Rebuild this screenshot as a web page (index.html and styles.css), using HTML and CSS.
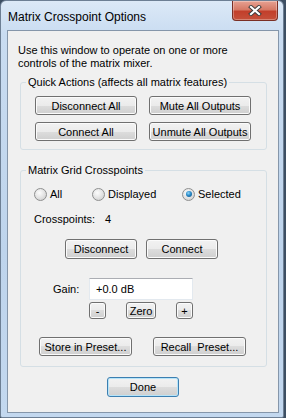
FILE: index.html
```html
<!DOCTYPE html>
<html lang="en">
<head>
  <title>Matrix Crosspoint Options</title>
  <meta charset="UTF-8">
  <link rel="stylesheet" href="styles.css">
</head>
<body>

  <div class="window">
    <div class="titlebar">
      <span class="title">Matrix Crosspoint Options</span>
      <div class="close">
        <svg width="16" height="11" viewBox="0 0 16 11">
          <path d="M4 2 L12 9 M12 2 L4 9" stroke="#3b3b3b" stroke-width="4" stroke-linecap="square" fill="none"/>
          <path d="M4 2 L12 9 M12 2 L4 9" stroke="#ffffff" stroke-width="2.2" stroke-linecap="square" fill="none"/>
        </svg>
      </div>
    </div>

    <div class="client">
      <p class="intro">Use this window to operate on one or more<br>controls of the matrix mixer.</p>

      <fieldset class="group quick">
        <legend>Quick Actions (affects all matrix features)</legend>
        <div class="quick-grid">
          <button class="btn">Disconnect All</button>
          <button class="btn">Mute All Outputs</button>
          <button class="btn">Connect All</button>
          <button class="btn">Unmute All Outputs</button>
        </div>
      </fieldset>

      <fieldset class="group grid">
        <legend>Matrix Grid Crosspoints</legend>

        <div class="radios">
          <label class="radio"><span class="dot"></span>All</label>
          <label class="radio"><span class="dot"></span>Displayed</label>
          <label class="radio"><span class="dot checked"></span>Selected</label>
        </div>

        <div class="count">
          <span class="count-label">Crosspoints:</span>
          <span>4</span>
        </div>

        <div class="connect-row">
          <button class="btn wide">Disconnect</button>
          <button class="btn wide">Connect</button>
        </div>

        <div class="gain-row">
          <span class="gain-label">Gain:</span>
          <div class="gain-box">+0.0 dB</div>
        </div>

        <div class="step-row">
          <button class="btn small">-</button>
          <button class="btn zero">Zero</button>
          <button class="btn small">+</button>
        </div>

        <div class="preset-row">
          <button class="btn preset">Store in Preset...</button>
          <button class="btn preset">Recall&nbsp; Preset...</button>
        </div>
      </fieldset>

      <div class="done-row">
        <button class="btn wide done">Done</button>
      </div>
    </div>
  </div>

</body>
</html>
```

FILE: styles.css
```css
html {
  background: #3d4f63;
}

body {
  margin: 0;
  font-family: 'Liberation Sans', Arial, sans-serif;
  font-size: 11px;
  color: #000;
}

.window {
  width: 284px;
  height: 418px;
  box-sizing: border-box;
  border: 1px solid #6d7f94;
  border-radius: 6px 6px 2px 2px;
  background: linear-gradient(180deg, #dce9f7 0%, #c9dcf1 8%, #bed4ec 60%, #c3d8ef 100%);
  display: flex;
  flex-direction: column;
}

.titlebar {
  height: 29px;
  display: flex;
  align-items: flex-start;
}

.title {
  font-size: 12px;
  margin: 9px 0 0 7px;
}

.close {
  margin-left: auto;
  margin-right: 5px;
  width: 46px;
  height: 20px;
  box-sizing: border-box;
  border: 1px solid #7a2f25;
  border-top: none;
  border-radius: 0 0 4px 4px;
  background: linear-gradient(180deg, #e6a192 0%, #d67a66 45%, #c23f2b 55%, #c5503a 100%);
  box-shadow: inset 0 0 0 1px rgba(255, 255, 255, 0.3);
  display: flex;
  align-items: center;
  justify-content: center;
}

.close svg {
  display: block;
}

.client {
  margin: 0 4px 0 6px;
  height: 383px;
  box-sizing: border-box;
  border: 1px solid #8596aa;
  background: #f0f0f0;
  display: flex;
  flex-direction: column;
}

.intro {
  margin: 13px 0 0 10px;
  line-height: 13px;
}

.group {
  margin: 6px 11px 0 12px;
  border: 1px solid #d5dfe5;
  border-radius: 3px;
  padding: 0;
  min-width: 0;
}

.group legend {
  padding: 0 2px;
  line-height: 13px;
}

.quick {
  padding: 7px 0 8px 14px;
}

.quick legend {
  margin-left: -9px;
}

.quick-grid {
  display: grid;
  grid-template-columns: 102px 102px;
  column-gap: 12px;
  row-gap: 7px;
}

.btn {
  height: 19px;
  box-sizing: border-box;
  border: 1px solid #707070;
  border-radius: 3px;
  background: linear-gradient(180deg, #f2f2f2 0%, #ebebeb 50%, #dddddd 50%, #cfcfcf 100%);
  box-shadow: inset 0 0 0 1px #fbfbfb;
  font-family: 'Liberation Sans', Arial, sans-serif;
  font-size: 11px;
  color: #000;
  padding: 0;
}

.grid {
  margin-top: 14px;
  padding: 0 0 10px 13px;
}

.grid legend {
  margin-left: -8px;
}

.radios {
  margin-top: 10px;
  display: grid;
  grid-template-columns: 58px 90px auto;
  height: 14px;
}

.radio {
  display: flex;
  align-items: center;
  gap: 3px;
}

.dot {
  width: 13px;
  height: 13px;
  box-sizing: border-box;
  border: 1px solid #8e8f8f;
  border-radius: 50%;
  background: radial-gradient(circle at 40% 35%, #fcfcfc 0%, #e6e6e6 45%, #c9c9c9 100%);
  display: flex;
  align-items: center;
  justify-content: center;
}

.dot.checked::after {
  content: "";
  width: 6px;
  height: 6px;
  border-radius: 50%;
  background: radial-gradient(circle at 40% 35%, #8fd6fa 0%, #2a8ac8 45%, #0c4b7e 100%);
}

.count {
  margin-top: 11px;
  height: 14px;
  display: flex;
  align-items: center;
}

.count-label {
  width: 71px;
}

.connect-row {
  margin: 13px 0 0 31px;
  display: flex;
  gap: 9px;
}

.wide {
  width: 72px;
  height: 20px;
}

.gain-row {
  margin-top: 19px;
  display: flex;
  align-items: center;
}

.gain-label {
  width: 55px;
  padding-left: 19px;
  box-sizing: border-box;
}

.gain-box {
  width: 104px;
  height: 22px;
  box-sizing: border-box;
  border: 1px solid #e3e9ef;
  border-top-color: #abadb3;
  background: #fff;
  padding-left: 6px;
  line-height: 20px;
}

.step-row {
  margin: 2px 0 0 55px;
  display: flex;
  align-items: center;
}

.small {
  width: 17px;
  height: 17px;
}

.zero {
  width: 30px;
  height: 17px;
  margin: 0 20px;
}

.preset-row {
  margin: 18px 0 0 5px;
  display: flex;
  gap: 21px;
}

.preset {
  width: 93px;
}

.done-row {
  margin: 10px 0 0 99px;
}

.done {
  border-color: #3c7fb1;
  box-shadow: inset 0 0 0 1px #b6e4f9;
}
```
